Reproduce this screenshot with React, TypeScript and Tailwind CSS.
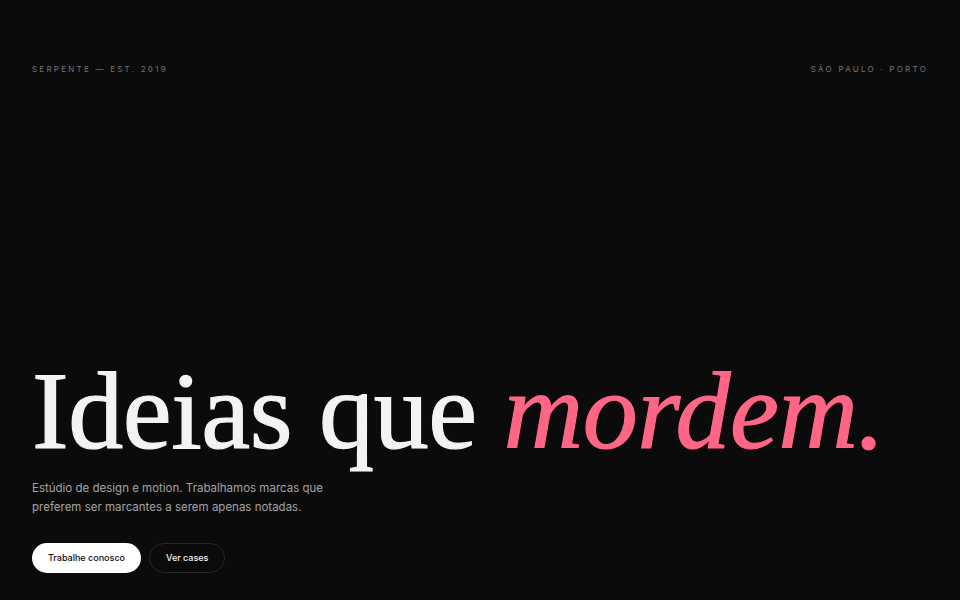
export default function App() {
  return (
    <div className="h-screen w-full bg-[#0b0b0b] flex flex-col justify-between px-8 pt-[64px] pb-[27px] font-['Inter',sans-serif]">
      <div className="flex items-center justify-between text-[8px] tracking-[0.28em] text-[#737373] uppercase leading-[10px]">
        <span>Serpente — Est. 2019</span>
        <span>São Paulo · Porto</span>
      </div>

      <div className="flex flex-col">
        <h1 className="font-['Liberation_Serif',serif] text-[110px] leading-[100px] tracking-[-0.004em] text-[#f3f3f3] [-webkit-text-stroke:1.2px_currentColor]">
          Ideias que <em className="italic text-[#ff6685]">mordem.</em>
        </h1>
        <p className="mt-[18px] text-[11.5px] leading-[19px] text-[#a3a3a3] max-w-[300px]">
          Estúdio de design e motion. Trabalhamos marcas que preferem ser marcantes a serem apenas notadas.
        </p>
        <div className="mt-[26px] flex items-center gap-2">
          <button className="h-[30px] px-4 rounded-full bg-white text-[#0b0b0b] text-[9px] font-medium">
            Trabalhe conosco
          </button>
          <button className="h-[30px] px-4 rounded-full border border-[#262626] text-[#f3f3f3] text-[9px] font-medium">
            Ver cases
          </button>
        </div>
      </div>
    </div>
  );
}
